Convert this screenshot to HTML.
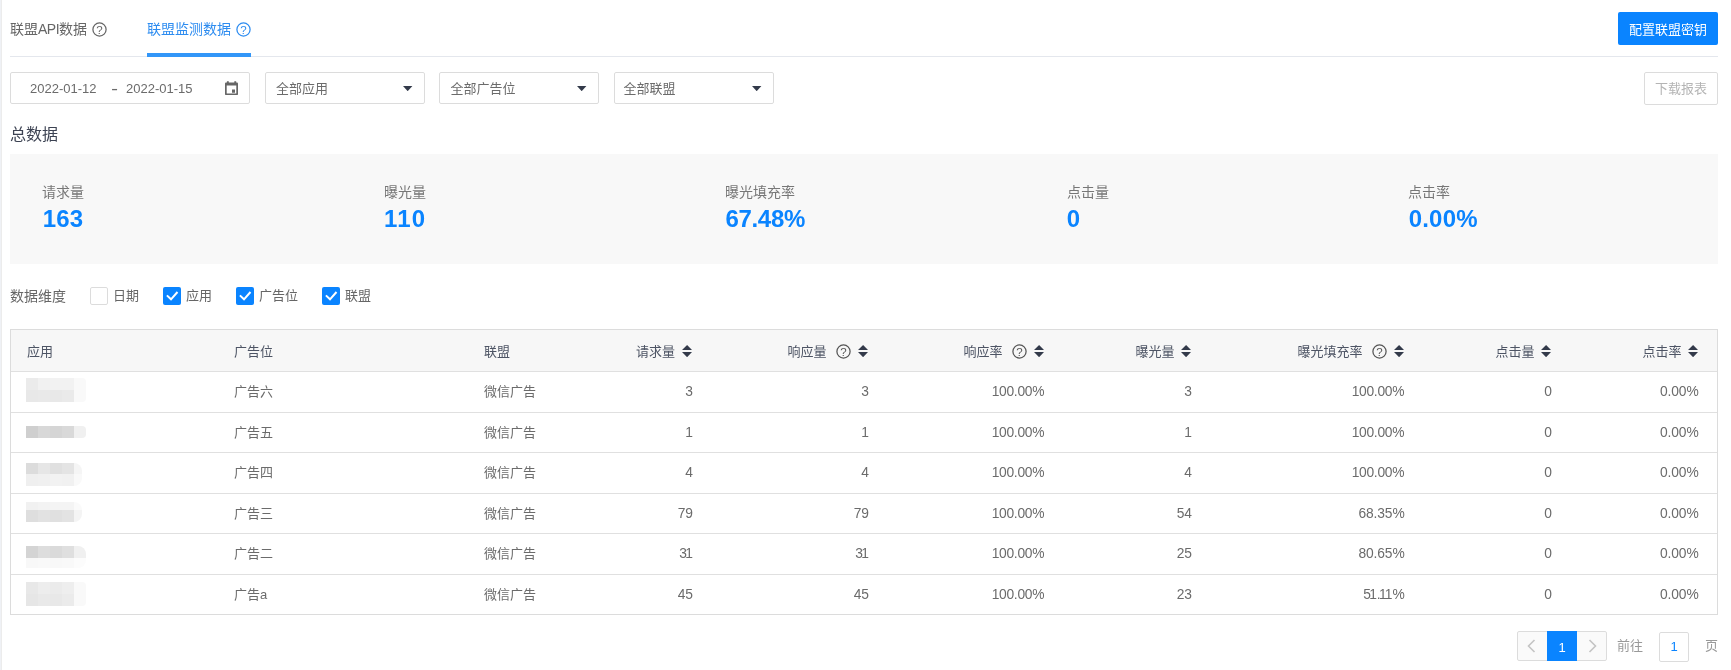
<!DOCTYPE html>
<html lang="zh-CN">
<head>
<meta charset="utf-8">
<title>联盟监测数据</title>
<style>
*{box-sizing:border-box;margin:0;padding:0}
html,body{width:1731px;height:670px;overflow:hidden;background:#fff}
body{position:relative;font-family:"Liberation Sans","Noto Sans CJK SC",sans-serif;font-size:13px;color:#666;line-height:1}
#root{position:absolute;left:0;top:0;width:1731px;height:670px;will-change:transform}
.abs{position:absolute;white-space:nowrap}
.strip{left:0;top:0;width:2px;height:670px;background:#ececec;border-left:1px solid #eff1f5}
.tabline{left:10px;top:56px;width:1708px;height:1px;background:#e4e7ed}
.tabbar{left:147px;top:53px;width:104px;height:4px;background:#3296f8}
.tab{top:21px;height:16px;line-height:16px;font-size:14px}
.btn-primary{left:1618px;top:12px;width:100px;height:33.4px;background:#0a84ff;border-radius:2px;color:#fff;font-size:13px;line-height:36px;text-align:center}
.btn-dl{left:1644px;top:72px;width:74px;height:33px;border:1px solid #dcdcdc;border-radius:2px;color:#b4b4b4;font-size:13px;line-height:31px;text-align:center;background:#fff}
.inp{top:72px;height:32px;border:1px solid #dcdcdc;border-radius:2px;background:#fff}
.itx{top:80.7px;font-size:13px;line-height:16px;color:#6b6b6b}
.caret{width:0;height:0;border-left:5px solid transparent;border-right:5px solid transparent;border-top:5px solid #333a4a;top:86px}
.h1{left:10px;top:126px;font-size:16px;line-height:18px;color:#3c4252}
.stats{left:10px;top:154px;width:1708px;height:110px;background:#f8f8f8}
.slabel{top:184px;font-size:14px;line-height:16px;color:#777}
.sval{top:205.6px;font-size:24px;line-height:26px;font-weight:bold;color:#0a84ff;letter-spacing:0.2px;margin-left:0.7px}
.dim{top:288px;font-size:13px;line-height:16px;color:#666}
.cb{top:287px;width:18px;height:18px;border-radius:2px}
.cb.off{border:1px solid #dcdcdc;background:#fff}
.cb.on{background:#0a84ff}
.table{left:10px;top:329px;width:1708px;height:286px;border:1px solid #dcdcdc}
.thead{left:11px;top:330px;width:1706px;height:41px;background:#f7f7f7}
.hl{left:11px;width:1706px;height:1px;background:#e0e0e0}
.th{top:343.6px;font-size:13px;line-height:16px;color:#4d5464}
.td{font-size:13px;line-height:16px;color:#6b6b6b}
.n{font-size:13.8px}
.o{margin-left:-1.6px}
.m{position:absolute;width:12px}
</style>
</head>
<body>
<div id="root">
<div class="abs strip"></div>
<div class="abs tabline"></div>
<div class="abs tabbar"></div>
<div class="abs tab" style="left:10px;color:#666">联盟<span style="letter-spacing:-0.5px">API</span>数据</div>
<svg class="abs" style="left:91.8px;top:22px" width="15" height="15" viewBox="0 0 15 15"><circle cx="7.5" cy="7.5" r="6.6" fill="none" stroke="#666" stroke-width="1.25"/><text x="7.5" y="11.5" text-anchor="middle" font-family="Liberation Sans, sans-serif" font-size="11.5" fill="#666">?</text></svg>
<div class="abs tab" style="left:147px;color:#2d8cf0">联盟监测数据</div>
<svg class="abs" style="left:236px;top:22px" width="15" height="15" viewBox="0 0 15 15"><circle cx="7.5" cy="7.5" r="6.6" fill="none" stroke="#2d8cf0" stroke-width="1.25"/><text x="7.5" y="11.5" text-anchor="middle" font-family="Liberation Sans, sans-serif" font-size="11.5" fill="#2d8cf0">?</text></svg>
<div class="abs btn-primary">配置联盟密钥</div>
<div class="abs btn-dl">下载报表</div>
<div class="abs inp" style="left:10px;width:240px"></div>
<div class="abs itx" style="left:30px">2022-01-12</div>
<div class="abs itx" style="left:111px;font-weight:bold;transform:scaleX(0.78)">–</div>
<div class="abs itx" style="left:126px">2022-01-15</div>
<svg class="abs" style="left:225px;top:80.5px" width="13" height="14.5" viewBox="0 0 13 14.5"><path d="M1.9 0.3h1.9v1.2h5.5v-1.2h1.9v1.2h0.5c.8 0 1.3.5 1.3 1.3v10.2c0 .8-.5 1.3-1.3 1.3H1.3c-.8 0-1.3-.5-1.3-1.3V2.8c0-.8.5-1.3 1.3-1.3h.6z M1.7 4.4v8.1h9.6V4.4z M7 8.4h3v3.4H7z" fill="#666" fill-rule="evenodd"/></svg>
<div class="abs inp" style="left:265px;width:160px"></div>
<div class="abs itx" style="left:276px">全部应用</div>
<svg class="abs" style="left:403.2px;top:85.7px" width="9.4" height="5.2" viewBox="0 0 9.4 5.2"><path d="M0 0H9.4L4.7 5.2Z" fill="#333a4a"/></svg>
<div class="abs inp" style="left:439px;width:160px"></div>
<div class="abs itx" style="left:450.4px">全部广告位</div>
<svg class="abs" style="left:577.2px;top:85.7px" width="9.4" height="5.2" viewBox="0 0 9.4 5.2"><path d="M0 0H9.4L4.7 5.2Z" fill="#333a4a"/></svg>
<div class="abs inp" style="left:614px;width:160px"></div>
<div class="abs itx" style="left:623.6px">全部联盟</div>
<svg class="abs" style="left:752.2px;top:85.7px" width="9.4" height="5.2" viewBox="0 0 9.4 5.2"><path d="M0 0H9.4L4.7 5.2Z" fill="#333a4a"/></svg>
<div class="abs h1">总数据</div>
<div class="abs stats"></div>
<div class="abs slabel" style="left:42px">请求量</div>
<div class="abs sval" style="left:42px">163</div>
<div class="abs slabel" style="left:384px">曝光量</div>
<div class="abs sval" style="left:384px;letter-spacing:1.2px;margin-left:0">110</div>
<div class="abs slabel" style="left:725px">曝光填充率</div>
<div class="abs sval" style="left:725px;letter-spacing:-0.3px;margin-left:0.4px">67.48%</div>
<div class="abs slabel" style="left:1067px">点击量</div>
<div class="abs sval" style="left:1067px;margin-left:-0.3px">0</div>
<div class="abs slabel" style="left:1408px">点击率</div>
<div class="abs sval" style="left:1408px">0.00%</div>
<div class="abs dim" style="left:10px;font-size:14px">数据维度</div>
<div class="abs cb off" style="left:90px"></div>
<div class="abs dim" style="left:113px">日期</div>
<div class="abs cb on" style="left:163px"><svg width="18" height="18" viewBox="0 0 18 18" style="display:block"><path d="M3.9 8.4 L8 12.3 L14.5 5" fill="none" stroke="#fff" stroke-width="2"/></svg></div>
<div class="abs dim" style="left:186px">应用</div>
<div class="abs cb on" style="left:236px"><svg width="18" height="18" viewBox="0 0 18 18" style="display:block"><path d="M3.9 8.4 L8 12.3 L14.5 5" fill="none" stroke="#fff" stroke-width="2"/></svg></div>
<div class="abs dim" style="left:259px">广告位</div>
<div class="abs cb on" style="left:322px"><svg width="18" height="18" viewBox="0 0 18 18" style="display:block"><path d="M3.9 8.4 L8 12.3 L14.5 5" fill="none" stroke="#fff" stroke-width="2"/></svg></div>
<div class="abs dim" style="left:345px">联盟</div>
<div class="abs table"></div>
<div class="abs thead"></div>
<div class="abs hl" style="top:371px"></div>
<div class="abs hl" style="top:412px"></div>
<div class="abs hl" style="top:452px"></div>
<div class="abs hl" style="top:493px"></div>
<div class="abs hl" style="top:533px"></div>
<div class="abs hl" style="top:574px"></div>
<div class="abs th" style="left:27px">应用</div>
<div class="abs th" style="left:234px">广告位</div>
<div class="abs th" style="left:484px">联盟</div>
<div class="abs th" style="left:636.0px">请求量</div>
<svg class="abs" style="left:682px;top:344.9px" width="10.2" height="12.2" viewBox="0 0 10.2 12.2"><path d="M5.1 0 L10.2 5.1 H0 Z M5.1 12.2 L10.2 6.9 H0 Z" fill="#333a4a"/></svg>
<div class="abs th" style="left:787.5px">响应量</div>
<svg class="abs" style="left:835.8px;top:344px" width="15" height="15" viewBox="0 0 15 15"><circle cx="7.5" cy="7.5" r="6.6" fill="none" stroke="#555" stroke-width="1.25"/><text x="7.5" y="11.5" text-anchor="middle" font-family="Liberation Sans, sans-serif" font-size="11.5" fill="#555">?</text></svg>
<svg class="abs" style="left:858px;top:344.9px" width="10.2" height="12.2" viewBox="0 0 10.2 12.2"><path d="M5.1 0 L10.2 5.1 H0 Z M5.1 12.2 L10.2 6.9 H0 Z" fill="#333a4a"/></svg>
<div class="abs th" style="left:963.5px">响应率</div>
<svg class="abs" style="left:1011.8px;top:344px" width="15" height="15" viewBox="0 0 15 15"><circle cx="7.5" cy="7.5" r="6.6" fill="none" stroke="#555" stroke-width="1.25"/><text x="7.5" y="11.5" text-anchor="middle" font-family="Liberation Sans, sans-serif" font-size="11.5" fill="#555">?</text></svg>
<svg class="abs" style="left:1034px;top:344.9px" width="10.2" height="12.2" viewBox="0 0 10.2 12.2"><path d="M5.1 0 L10.2 5.1 H0 Z M5.1 12.2 L10.2 6.9 H0 Z" fill="#333a4a"/></svg>
<div class="abs th" style="left:1135.5px">曝光量</div>
<svg class="abs" style="left:1181px;top:344.9px" width="10.2" height="12.2" viewBox="0 0 10.2 12.2"><path d="M5.1 0 L10.2 5.1 H0 Z M5.1 12.2 L10.2 6.9 H0 Z" fill="#333a4a"/></svg>
<div class="abs th" style="left:1297.5px">曝光填充率</div>
<svg class="abs" style="left:1371.8px;top:344px" width="15" height="15" viewBox="0 0 15 15"><circle cx="7.5" cy="7.5" r="6.6" fill="none" stroke="#555" stroke-width="1.25"/><text x="7.5" y="11.5" text-anchor="middle" font-family="Liberation Sans, sans-serif" font-size="11.5" fill="#555">?</text></svg>
<svg class="abs" style="left:1394px;top:344.9px" width="10.2" height="12.2" viewBox="0 0 10.2 12.2"><path d="M5.1 0 L10.2 5.1 H0 Z M5.1 12.2 L10.2 6.9 H0 Z" fill="#333a4a"/></svg>
<div class="abs th" style="left:1495.5px">点击量</div>
<svg class="abs" style="left:1541px;top:344.9px" width="10.2" height="12.2" viewBox="0 0 10.2 12.2"><path d="M5.1 0 L10.2 5.1 H0 Z M5.1 12.2 L10.2 6.9 H0 Z" fill="#333a4a"/></svg>
<div class="abs th" style="left:1642.5px">点击率</div>
<svg class="abs" style="left:1688px;top:344.9px" width="10.2" height="12.2" viewBox="0 0 10.2 12.2"><path d="M5.1 0 L10.2 5.1 H0 Z M5.1 12.2 L10.2 6.9 H0 Z" fill="#333a4a"/></svg>
<div class="abs td" style="left:234px;top:383.8px">广告六</div>
<div class="abs td" style="left:484px;top:383.8px">微信广告</div>
<div class="abs td n" style="right:1038.1px;top:384px;letter-spacing:-0.1px">3</div>
<div class="abs td n" style="right:862.1px;top:384px;letter-spacing:-0.1px">3</div>
<div class="abs td n" style="right:686.9px;top:384px;letter-spacing:-0.3px"><span class="o">1</span>00.00%</div>
<div class="abs td n" style="right:539.1px;top:384px;letter-spacing:-0.1px">3</div>
<div class="abs td n" style="right:326.9px;top:384px;letter-spacing:-0.3px"><span class="o">1</span>00.00%</div>
<div class="abs td n" style="right:179.1px;top:384px;letter-spacing:-0.1px">0</div>
<div class="abs td n" style="right:32.4px;top:384px;letter-spacing:-0.1px">0.00%</div>
<div class="abs td" style="left:234px;top:424.5px">广告五</div>
<div class="abs td" style="left:484px;top:424.5px">微信广告</div>
<div class="abs td n" style="right:1038.1px;top:425px;letter-spacing:-0.1px"><span class="o">1</span></div>
<div class="abs td n" style="right:862.1px;top:425px;letter-spacing:-0.1px"><span class="o">1</span></div>
<div class="abs td n" style="right:686.9px;top:425px;letter-spacing:-0.3px"><span class="o">1</span>00.00%</div>
<div class="abs td n" style="right:539.1px;top:425px;letter-spacing:-0.1px"><span class="o">1</span></div>
<div class="abs td n" style="right:326.9px;top:425px;letter-spacing:-0.3px"><span class="o">1</span>00.00%</div>
<div class="abs td n" style="right:179.1px;top:425px;letter-spacing:-0.1px">0</div>
<div class="abs td n" style="right:32.4px;top:425px;letter-spacing:-0.1px">0.00%</div>
<div class="abs td" style="left:234px;top:465.1px">广告四</div>
<div class="abs td" style="left:484px;top:465.1px">微信广告</div>
<div class="abs td n" style="right:1038.1px;top:465px;letter-spacing:-0.1px">4</div>
<div class="abs td n" style="right:862.1px;top:465px;letter-spacing:-0.1px">4</div>
<div class="abs td n" style="right:686.9px;top:465px;letter-spacing:-0.3px"><span class="o">1</span>00.00%</div>
<div class="abs td n" style="right:539.1px;top:465px;letter-spacing:-0.1px">4</div>
<div class="abs td n" style="right:326.9px;top:465px;letter-spacing:-0.3px"><span class="o">1</span>00.00%</div>
<div class="abs td n" style="right:179.1px;top:465px;letter-spacing:-0.1px">0</div>
<div class="abs td n" style="right:32.4px;top:465px;letter-spacing:-0.1px">0.00%</div>
<div class="abs td" style="left:234px;top:505.7px">广告三</div>
<div class="abs td" style="left:484px;top:505.7px">微信广告</div>
<div class="abs td n" style="right:1038.1px;top:506px;letter-spacing:-0.1px">79</div>
<div class="abs td n" style="right:862.1px;top:506px;letter-spacing:-0.1px">79</div>
<div class="abs td n" style="right:686.9px;top:506px;letter-spacing:-0.3px"><span class="o">1</span>00.00%</div>
<div class="abs td n" style="right:539.1px;top:506px;letter-spacing:-0.1px">54</div>
<div class="abs td n" style="right:326.4px;top:506px;letter-spacing:-0.1px">68.35%</div>
<div class="abs td n" style="right:179.1px;top:506px;letter-spacing:-0.1px">0</div>
<div class="abs td n" style="right:32.4px;top:506px;letter-spacing:-0.1px">0.00%</div>
<div class="abs td" style="left:234px;top:546.3px">广告二</div>
<div class="abs td" style="left:484px;top:546.3px">微信广告</div>
<div class="abs td n" style="right:1038.1px;top:546px;letter-spacing:-0.1px">3<span class="o">1</span></div>
<div class="abs td n" style="right:862.1px;top:546px;letter-spacing:-0.1px">3<span class="o">1</span></div>
<div class="abs td n" style="right:686.9px;top:546px;letter-spacing:-0.3px"><span class="o">1</span>00.00%</div>
<div class="abs td n" style="right:539.1px;top:546px;letter-spacing:-0.1px">25</div>
<div class="abs td n" style="right:326.4px;top:546px;letter-spacing:-0.1px">80.65%</div>
<div class="abs td n" style="right:179.1px;top:546px;letter-spacing:-0.1px">0</div>
<div class="abs td n" style="right:32.4px;top:546px;letter-spacing:-0.1px">0.00%</div>
<div class="abs td" style="left:234px;top:586.9px">广告a</div>
<div class="abs td" style="left:484px;top:586.9px">微信广告</div>
<div class="abs td n" style="right:1038.1px;top:587px;letter-spacing:-0.1px">45</div>
<div class="abs td n" style="right:862.1px;top:587px;letter-spacing:-0.1px">45</div>
<div class="abs td n" style="right:686.9px;top:587px;letter-spacing:-0.3px"><span class="o">1</span>00.00%</div>
<div class="abs td n" style="right:539.1px;top:587px;letter-spacing:-0.1px">23</div>
<div class="abs td n" style="right:326.4px;top:587px;letter-spacing:-0.1px">5<span class="o">1</span>.<span class="o">1</span><span class="o">1</span>%</div>
<div class="abs td n" style="right:179.1px;top:587px;letter-spacing:-0.1px">0</div>
<div class="abs td n" style="right:32.4px;top:587px;letter-spacing:-0.1px">0.00%</div>
<div class="m" style="left:26px;top:378px;height:12px;background:#ebebeb"></div>
<div class="m" style="left:38px;top:378px;height:12px;background:#f1f1f1"></div>
<div class="m" style="left:50px;top:378px;height:12px;background:#f2f2f2"></div>
<div class="m" style="left:62px;top:378px;height:12px;background:#f2f2f2"></div>
<div class="m" style="left:74px;top:378px;height:12px;background:#f9f9f9;width:12px;border-radius:0 4px 0px 0"></div>
<div class="m" style="left:26px;top:390px;height:12px;background:#e8e8e8"></div>
<div class="m" style="left:38px;top:390px;height:12px;background:#e9e9e9"></div>
<div class="m" style="left:50px;top:390px;height:12px;background:#e8e8e8"></div>
<div class="m" style="left:62px;top:390px;height:12px;background:#eaeaea"></div>
<div class="m" style="left:74px;top:390px;height:12px;background:#f9f9f9;width:12px;border-radius:0 0px 4px 0"></div>
<div class="m" style="left:26px;top:426px;height:12px;background:#cfcfcf"></div>
<div class="m" style="left:38px;top:426px;height:12px;background:#d8d8d8"></div>
<div class="m" style="left:50px;top:426px;height:12px;background:#d5d5d5"></div>
<div class="m" style="left:62px;top:426px;height:12px;background:#d9d9d9"></div>
<div class="m" style="left:74px;top:426px;height:12px;background:#f0f0f0;width:12px;border-radius:0 4px 4px 0"></div>
<div class="m" style="left:26px;top:463px;height:11px;background:#dcdcdc"></div>
<div class="m" style="left:38px;top:463px;height:11px;background:#e6e6e6"></div>
<div class="m" style="left:50px;top:463px;height:11px;background:#e0e0e0"></div>
<div class="m" style="left:62px;top:463px;height:11px;background:#e4e4e4"></div>
<div class="m" style="left:74px;top:463px;height:11px;background:#f5f5f5;width:8px;border-radius:0 9px 0px 0"></div>
<div class="m" style="left:26px;top:474px;height:12px;background:#efefef"></div>
<div class="m" style="left:38px;top:474px;height:12px;background:#f0f0f0"></div>
<div class="m" style="left:50px;top:474px;height:12px;background:#f2f2f2"></div>
<div class="m" style="left:62px;top:474px;height:12px;background:#f1f1f1"></div>
<div class="m" style="left:74px;top:474px;height:12px;background:#f9f9f9;width:8px;border-radius:0 0px 9px 0"></div>
<div class="m" style="left:26px;top:502px;height:8px;background:#f1f1f1"></div>
<div class="m" style="left:38px;top:502px;height:8px;background:#f3f3f3"></div>
<div class="m" style="left:50px;top:502px;height:8px;background:#f4f4f4"></div>
<div class="m" style="left:62px;top:502px;height:8px;background:#f4f4f4"></div>
<div class="m" style="left:74px;top:502px;height:8px;background:#fafafa;width:8px;border-radius:0 9px 0px 0"></div>
<div class="m" style="left:26px;top:510px;height:12px;background:#dedede"></div>
<div class="m" style="left:38px;top:510px;height:12px;background:#e2e2e2"></div>
<div class="m" style="left:50px;top:510px;height:12px;background:#e0e0e0"></div>
<div class="m" style="left:62px;top:510px;height:12px;background:#e3e3e3"></div>
<div class="m" style="left:74px;top:510px;height:12px;background:#f4f4f4;width:8px;border-radius:0 0px 9px 0"></div>
<div class="m" style="left:26px;top:546px;height:12px;background:#d4d4d4"></div>
<div class="m" style="left:38px;top:546px;height:12px;background:#dddddd"></div>
<div class="m" style="left:50px;top:546px;height:12px;background:#dadada"></div>
<div class="m" style="left:62px;top:546px;height:12px;background:#dfdfdf"></div>
<div class="m" style="left:74px;top:546px;height:12px;background:#f0f0f0;width:12px;border-radius:0 8px 0px 0"></div>
<div class="m" style="left:26px;top:558px;height:10px;background:#f8f8f8"></div>
<div class="m" style="left:38px;top:558px;height:10px;background:#f9f9f9"></div>
<div class="m" style="left:50px;top:558px;height:10px;background:#f8f8f8"></div>
<div class="m" style="left:62px;top:558px;height:10px;background:#f9f9f9"></div>
<div class="m" style="left:74px;top:558px;height:10px;background:#fcfcfc;width:12px;border-radius:0 0px 8px 0"></div>
<div class="m" style="left:26px;top:582px;height:12px;background:#e8e8e8"></div>
<div class="m" style="left:38px;top:582px;height:12px;background:#ededed"></div>
<div class="m" style="left:50px;top:582px;height:12px;background:#ebebeb"></div>
<div class="m" style="left:62px;top:582px;height:12px;background:#eeeeee"></div>
<div class="m" style="left:74px;top:582px;height:12px;background:#f9f9f9;width:12px;border-radius:0 4px 0px 0"></div>
<div class="m" style="left:26px;top:594px;height:12px;background:#e6e6e6"></div>
<div class="m" style="left:38px;top:594px;height:12px;background:#e9e9e9"></div>
<div class="m" style="left:50px;top:594px;height:12px;background:#e8e8e8"></div>
<div class="m" style="left:62px;top:594px;height:12px;background:#ebebeb"></div>
<div class="m" style="left:74px;top:594px;height:12px;background:#f9f9f9;width:12px;border-radius:0 0px 4px 0"></div>
<div class="abs" style="left:1517px;top:631px;width:90px;height:30px;border:1px solid #dcdcdc;border-radius:2px;background:#fafafa"></div>
<div class="abs" style="left:1547px;top:631px;width:30px;height:30px;background:#0a84ff;color:#fff;font-size:13px;line-height:33px;text-align:center">1</div>
<svg class="abs" style="left:1527px;top:639px" width="9" height="14" viewBox="0 0 9 14"><path d="M7.5 1 L1.5 7 L7.5 13" fill="none" stroke="#c4c4c4" stroke-width="1.6"/></svg>
<svg class="abs" style="left:1588px;top:639px" width="9" height="14" viewBox="0 0 9 14"><path d="M1.5 1 L7.5 7 L1.5 13" fill="none" stroke="#c4c4c4" stroke-width="1.6"/></svg>
<div class="abs" style="left:1617px;top:638px;font-size:13px;line-height:16px;color:#999">前往</div>
<div class="abs" style="left:1659px;top:632px;width:30px;height:30px;border:1px solid #dcdcdc;border-radius:2px;background:#fff;color:#0a84ff;font-size:13px;line-height:28.6px;text-align:center">1</div>
<div class="abs" style="left:1705px;top:638px;font-size:13px;line-height:16px;color:#999">页</div>
</div>
</body>
</html>
